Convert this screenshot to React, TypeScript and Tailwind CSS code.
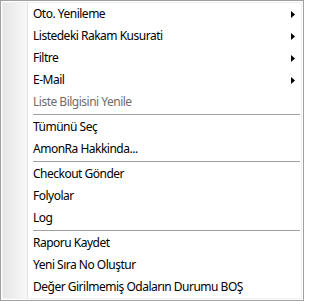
import React from "react";

type Item =
  | { kind: "item"; label: string; sub?: boolean; disabled?: boolean }
  | { kind: "sep" };

const items: Item[] = [
  { kind: "item", label: "Oto. Yenileme", sub: true },
  { kind: "item", label: "Listedeki Rakam Kusurati", sub: true },
  { kind: "item", label: "Filtre", sub: true },
  { kind: "item", label: "E-Mail", sub: true },
  { kind: "item", label: "Liste Bilgisini Yenile", disabled: true },
  { kind: "sep" },
  { kind: "item", label: "Tümünü Seç" },
  { kind: "item", label: "AmonRa Hakkinda..." },
  { kind: "sep" },
  { kind: "item", label: "Checkout Gönder" },
  { kind: "item", label: "Folyolar" },
  { kind: "item", label: "Log" },
  { kind: "sep" },
  { kind: "item", label: "Raporu Kaydet" },
  { kind: "item", label: "Yeni Sıra No Oluştur" },
  { kind: "item", label: "Değer Girilmemiş Odaların Durumu BOŞ" },
];

function Arrow() {
  return (
    <svg width="4" height="7" viewBox="0 0 4 7">
      <polygon points="0,0 4,3.5 0,7" fill="#000" />
    </svg>
  );
}

export default function App() {
  return (
    <div className="w-[304px] h-[301px] border border-[#a0a0a0] bg-white p-px font-['Noto_Sans',sans-serif] text-[12px] tracking-[-0.5px]">
      <div className="flex h-full border border-[#f0f0f0]">
        <div className="w-[24px] bg-gradient-to-r from-[#e6e6e6] to-[#f8f8f8]" />
        <div className="w-px bg-[#e2e3e3]" />
        <div className="w-px bg-white" />
        <div className="flex flex-1 flex-col">
          {items.map((it, i) =>
            it.kind === "sep" ? (
              <div key={i} className="h-[3px] pt-px pl-[4px] pr-[1px]">
                <div className="h-px bg-[#a0a0a0]" />
              </div>
            ) : (
              <div
                key={i}
                className={
                  "flex h-[22px] items-center justify-between pl-[4px] pr-[6px] " +
                  (it.disabled ? "text-[#6d6d6d]" : "text-black")
                }
              >
                <span>{it.label}</span>
                {it.sub && <Arrow />}
              </div>
            )
          )}
        </div>
      </div>
    </div>
  );
}
